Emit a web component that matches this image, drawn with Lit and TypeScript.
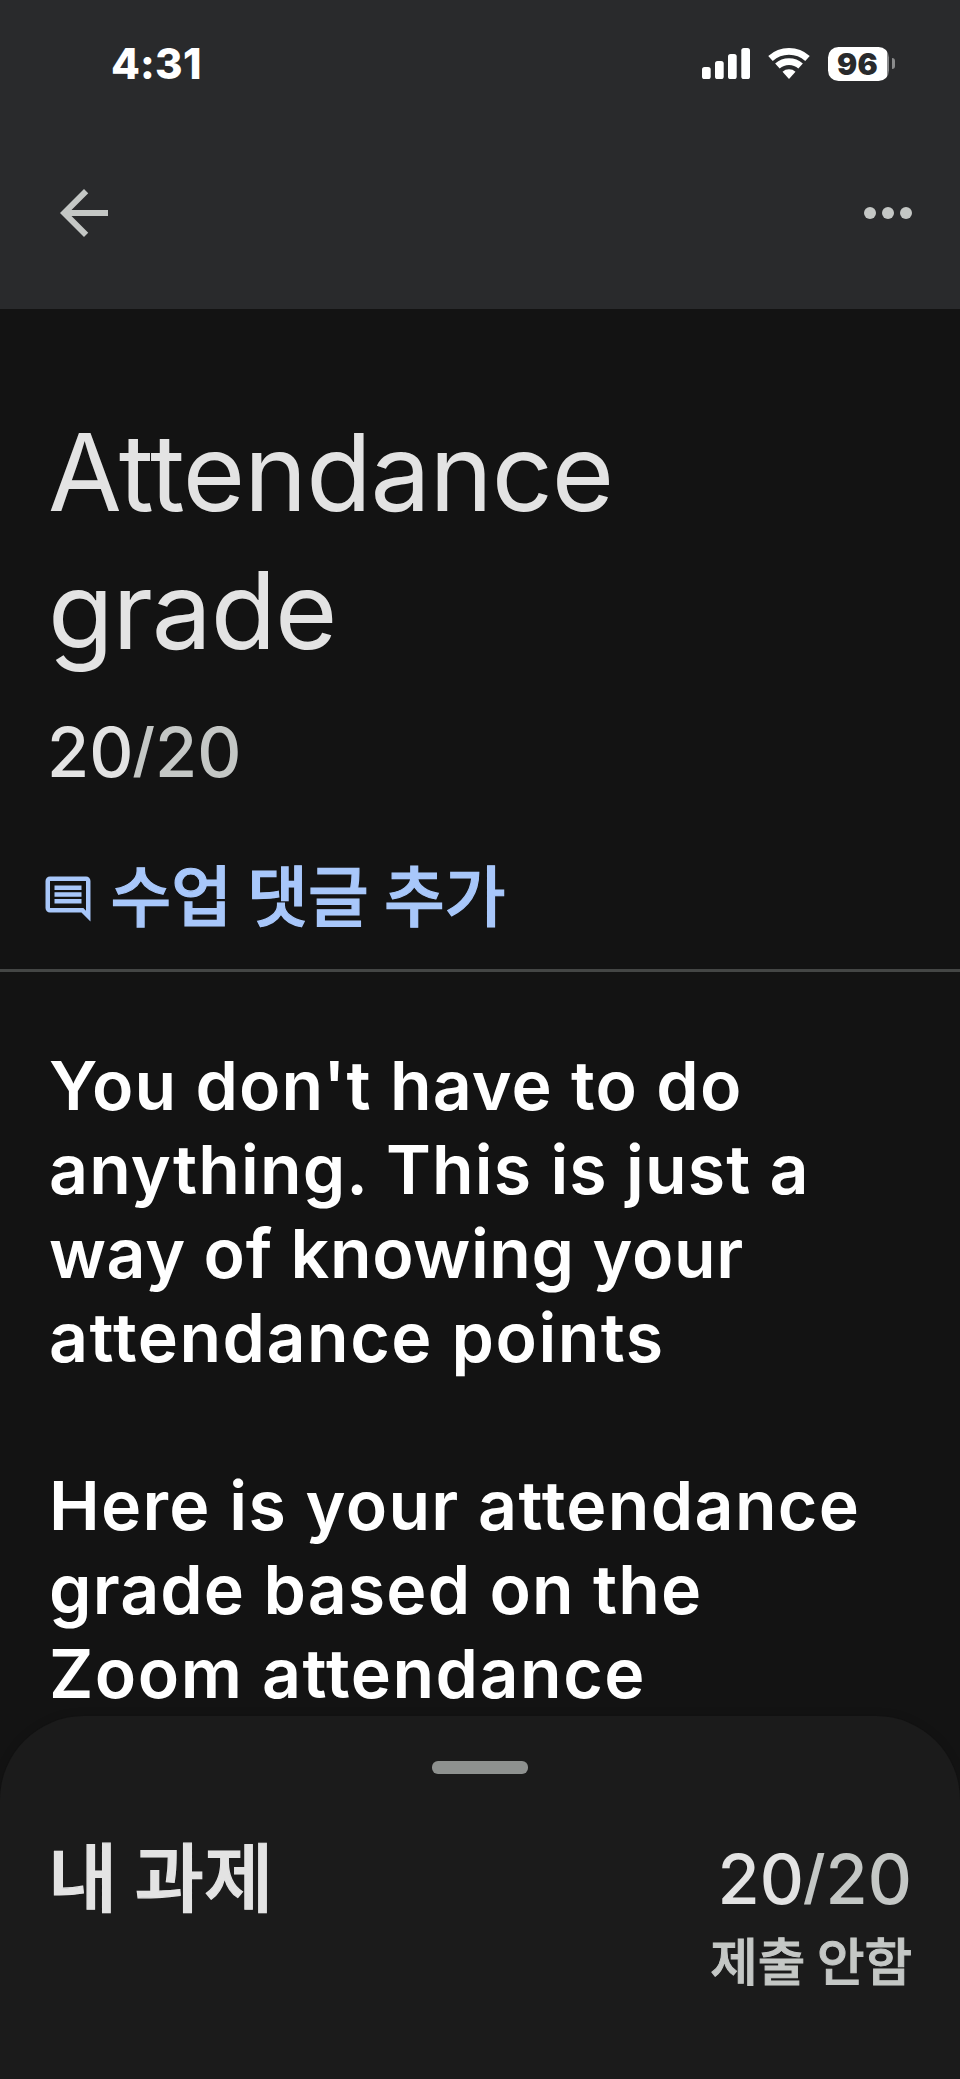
import { LitElement, html, svg, css } from "lit";
import { customElement, property } from "lit/decorators.js";

const signalBars = [
  { x: 0, h: 12 },
  { x: 13, h: 18 },
  { x: 26, h: 25 },
  { x: 39.3, h: 31 },
];

@customElement("status-bar")
export class StatusBar extends LitElement {
  static styles = css`
    :host {
      display: flex;
      justify-content: space-between;
      align-items: center;
      height: 127px;
      padding: 0 65px 0 111px;
      box-sizing: border-box;
      color: #fff;
      font-family: Inter, "Liberation Sans", sans-serif;
    }
    .time {
      font-size: 42px;
      font-weight: 800;
      letter-spacing: 0.2px;
      line-height: 50px;
    }
    .tray {
      display: flex;
      align-items: center;
    }
    .signal {
      margin-right: 18px;
    }
    .wifi {
      margin-right: 18px;
    }
    svg {
      display: block;
    }
    .cell {
      width: 61.5px;
      height: 34px;
      box-sizing: border-box;
      border-radius: 10.5px;
      background: linear-gradient(90deg, #fff 59px, #8a8b8c 59px);
      color: #292a2c;
      font-size: 30px;
      font-weight: 900;
      letter-spacing: 0.3px;
      line-height: 34px;
      text-align: center;
      padding-right: 2px;
    }
    .nub {
      width: 3.5px;
      height: 11px;
      margin-left: 2.3px;
      border-radius: 0 5px 5px 0;
      background: #8a8b8c;
    }
  `;

  render() {
    return html`
      <span class="time">4:31</span>
      <div class="tray">
        <svg class="signal" width="48" height="31" viewBox="0 0 48 31">
          ${signalBars.map(
            (b) => svg`<rect x=${b.x} y=${31 - b.h} width="8.7" height=${b.h} rx="2.6" fill="#fff"></rect>`
          )}
        </svg>
        <svg class="wifi" width="42" height="31" viewBox="-21 -31 42 31">
          <g fill="none" stroke="#fff" stroke-width="6.7">
            <path d="M-18.5 -20.5A27.6 27.6 0 0 1 18.5 -20.5"></path>
            <path d="M-11.6 -12.9A17.3 17.3 0 0 1 11.6 -12.9"></path>
          </g>
          <path d="M0 0L-6.5 -7.3A10 10 0 0 1 6.5 -7.3Z" fill="#fff"></path>
        </svg>
        <span class="cell">96</span>
        <span class="nub"></span>
      </div>
    `;
  }
}

@customElement("grade-score")
export class GradeScore extends LitElement {
  @property() earned = "";
  @property() total = "";

  static styles = css`
    :host {
      display: block;
      font-family: Inter, "Liberation Sans", sans-serif;
      font-size: 68.5px;
      font-weight: 450;
      line-height: 86px;
      height: 84px;
      color: #e3e3e3;
      white-space: nowrap;
    }
    .rest {
      color: #c4c7c5;
    }
    .slash {
      display: inline-block;
      font-size: 59px;
      line-height: 1;
      vertical-align: 6px;
      margin: 0 0.1px 0 -0.9px;
      font-weight: 560;
    }
  `;

  render() {
    return html`${this.earned}<span class="rest"><span class="slash">/</span>${this.total}</span>`;
  }
}

@customElement("app-root")
export class AppRoot extends LitElement {
  static styles = css`
    :host {
      display: flex;
      flex-direction: column;
      width: 960px;
      height: 2079px;
      overflow: hidden;
      background: #131313;
      color: #e3e3e3;
      font-family: Inter, "Noto Sans CJK KR", sans-serif;
    }
    svg {
      display: block;
    }
    .header {
      height: 309px;
      background: #292a2c;
    }
    .toolbar {
      display: flex;
      justify-content: space-between;
      padding: 50px 36px 0 48px;
    }
    .summary {
      box-sizing: border-box;
      padding: 94px 47px 0;
      border-bottom: 3px solid #444645;
      height: 663px;
    }
    h1 {
      margin: 0 0 31px 1px;
      font-size: 107px;
      font-weight: 400;
      line-height: 138px;
      letter-spacing: -1.1px;
    }
    .comment {
      display: flex;
      align-items: center;
      gap: 16px;
      height: 96px;
      margin: 50px 0 0 -6.5px;
      color: #a8c7fa;
      font: 500 66px/96px "Noto Sans CJK KR", sans-serif;
      letter-spacing: 0.15px;
      -webkit-text-stroke: 1.2px currentColor;
      white-space: nowrap;
    }
    .comment svg {
      position: relative;
      top: 7px;
    }
    .body {
      box-sizing: border-box;
      height: 744px;
      padding: 71px 48px 0 49px;
      color: #fff;
      font-size: 68px;
      font-weight: 560;
      line-height: 84px;
      white-space: nowrap;
    }
    .line {
      display: block;
      height: 84px;
      letter-spacing: 1.12px;
    }
    .tight {
      letter-spacing: 0.65px;
    }
    .mid {
      letter-spacing: 1.32px;
    }
    .wide {
      letter-spacing: 1.5px;
    }
    .sheet {
      flex: 1;
      border-radius: 84px 84px 0 0;
      background: #1b1b1b;
      box-shadow: 0 0 10px rgba(0, 0, 0, 0.15);
      padding: 45px 48px 0;
    }
    .handle {
      width: 96px;
      height: 12.5px;
      margin: 0 auto;
      border-radius: 6px;
      background: #8e918f;
    }
    .work {
      display: flex;
      justify-content: space-between;
      align-items: flex-start;
      margin-top: 47.5px;
      font-family: "Noto Sans CJK KR", sans-serif;
    }
    .label {
      padding-top: 1.5px;
      font-size: 75.5px;
      font-weight: 500;
      line-height: 100px;
      -webkit-text-stroke: 1.2px currentColor;
    }
    .result {
      display: flex;
      flex-direction: column;
      align-items: flex-end;
      padding-top: 16px;
    }
    .state {
      margin-top: 8px;
      color: #c4c7c5;
      font-size: 51.7px;
      font-weight: 500;
      line-height: 60px;
      -webkit-text-stroke: 1px currentColor;
    }
  `;

  render() {
    return html`
      <header class="header">
        <status-bar></status-bar>
        <div class="toolbar">
          <svg width="72" height="72" viewBox="0 0 24 24" fill="#c4c7c5">
            <path d="M20 11H7.83l5.59-5.59L12 4l-8 8 8 8 1.41-1.41L7.83 13H20v-2z"></path>
          </svg>
          <svg width="72" height="72" viewBox="0 0 24 24" fill="#c4c7c5">
            <circle cx="6" cy="12" r="2"></circle>
            <circle cx="12" cy="12" r="2"></circle>
            <circle cx="18" cy="12" r="2"></circle>
          </svg>
        </div>
      </header>
      <section class="summary">
        <h1>Attendance<br />grade</h1>
        <grade-score earned="20" total="20"></grade-score>
        <div class="comment">
          <svg width="54" height="54" viewBox="0 0 24 24" fill="currentColor" stroke="none">
            <path
              d="M21.99 4c0-1.1-.89-2-1.99-2H4c-1.1 0-2 .9-2 2v12c0 1.1.9 2 2 2h14l4 4-.01-18zM20 4v13.17L18.83 16H4V4h16zM6 12h12v2H6v-2zm0-3h12v2H6V9zm0-3h12v2H6V6z"
            ></path>
          </svg>
          <span>수업 댓글 추가</span>
        </div>
      </section>
      <section class="body">
        <span class="line">You don't have to do</span>
        <span class="line">anything. This is just a</span>
        <span class="line tight">way of knowing your</span>
        <span class="line wide">attendance points</span>
        <span class="line"></span>
        <span class="line mid">Here is your attendance</span>
        <span class="line">grade based on the</span>
        <span class="line wide">Zoom attendance</span>
      </section>
      <section class="sheet">
        <div class="handle"></div>
        <div class="work">
          <span class="label">내 과제</span>
          <div class="result">
            <grade-score earned="20" total="20"></grade-score>
            <span class="state">제출 안함</span>
          </div>
        </div>
      </section>
    `;
  }
}
